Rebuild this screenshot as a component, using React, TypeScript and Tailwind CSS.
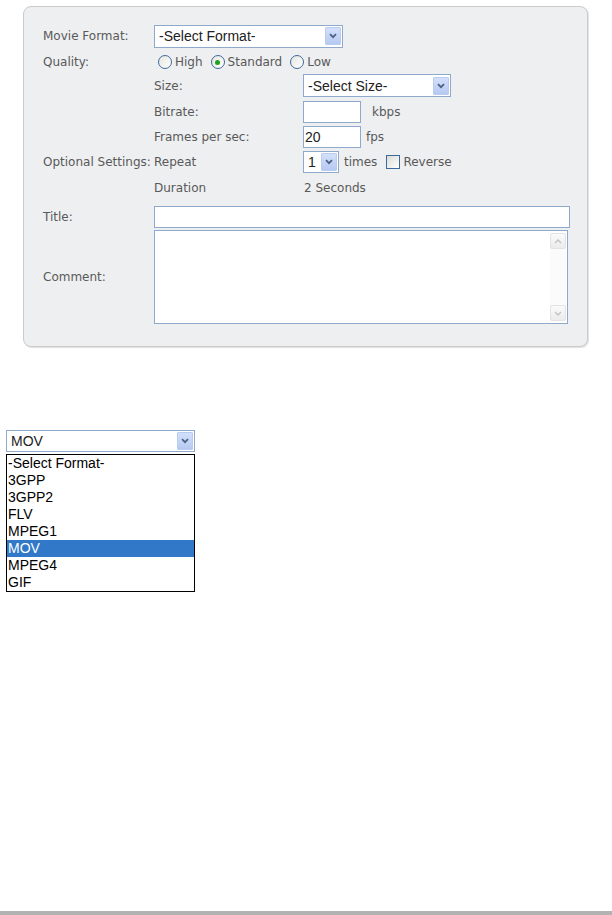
import React from 'react';

const label = "font-['DejaVu_Sans',sans-serif] text-[12px] text-[#595959]";
const field = "font-['Liberation_Sans',Arial,sans-serif] text-[14px] text-[#222]";

const ArrowButton = () => (
  <div className="flex h-[18px] w-[16px] shrink-0 items-center justify-center rounded-[1px] border border-[#b9cbef] bg-gradient-to-b from-[#d3e0fb] to-[#b6c9f1]">
    <svg width="8" height="6" viewBox="0 0 8 6">
      <path d="M1 1.2 L4 4.2 L7 1.2" fill="none" stroke="#4d6185" strokeWidth="1.8" />
    </svg>
  </div>
);

const Select = ({ text, w, h = 'h-[22px]' }: { text: string; w: string; h?: string }) => (
  <div className={`${w} ${h} flex items-center justify-between border border-[#8fa9cd] bg-white pl-[4px] pr-[1px]`}>
    <span className={`${field} leading-none`}>{text}</span>
    <ArrowButton />
  </div>
);

const Radio = ({ checked = false }: { checked?: boolean }) => (
  <div className="flex h-[14px] w-[14px] shrink-0 items-center justify-center rounded-full border border-[#3d6a9c] bg-gradient-to-br from-[#e6e6e0] to-white">
    {checked && <div className="h-[5px] w-[5px] rounded-full bg-[#21a121]" />}
  </div>
);

const ScrollBtn = ({ up }: { up?: boolean }) => (
  <div className="flex h-[16px] w-[16px] items-center justify-center rounded-[2px] border border-[#e3e3e3] bg-gradient-to-b from-[#fafafa] to-[#ececec]">
    <svg width="8" height="5" viewBox="0 0 8 5">
      <path d={up ? 'M1 4 L4 1 L7 4' : 'M1 1 L4 4 L7 1'} fill="none" stroke="#c2c2c2" strokeWidth="1.4" />
    </svg>
  </div>
);

const formats = ['-Select Format-', '3GPP', '3GPP2', 'FLV', 'MPEG1', 'MOV', 'MPEG4', 'GIF'];

export default function App() {
  return (
    <div className="relative h-[915px] w-[612px] overflow-hidden bg-white">
      {/* settings panel */}
      <div className="ml-[23px] mt-[6px] h-[341px] w-[565px] rounded-[8px] border border-[#cbcbcb] bg-[#eeeff1] pl-[19px] pt-[18px] shadow-[1px_1px_1px_rgba(0,0,0,0.12)]">
        <div className="flex h-[22px] items-center">
          <span className={`${label} w-[111px]`}>Movie Format:</span>
          <Select text="-Select Format-" w="w-[189px]" h="h-[23px]" />
        </div>

        <div className="mt-[3px] flex h-[24px] items-center">
          <span className={`${label} w-[111px]`}>Quality:</span>
          <div className="ml-[4px] flex items-center">
            <Radio />
            <span className={`${label} ml-[3px]`}>High</span>
            <div className="ml-[8px]"><Radio checked /></div>
            <span className={`${label} ml-[3px]`}>Standard</span>
            <div className="ml-[8px]"><Radio /></div>
            <span className={`${label} ml-[3px]`}>Low</span>
          </div>
        </div>

        <div className="flex h-[23px] items-center">
          <span className="w-[111px]" />
          <span className={`${label} w-[149px]`}>Size:</span>
          <Select text="-Select Size-" w="w-[148px]" h="h-[23px]" />
        </div>

        <div className="mt-[4px] flex h-[22px] items-center">
          <span className="w-[111px]" />
          <span className={`${label} w-[149px]`}>Bitrate:</span>
          <div className="h-[22px] w-[58px] border border-[#8fa9cd] bg-white" />
          <span className={`${label} ml-[11px]`}>kbps</span>
        </div>

        <div className="mt-[3px] flex h-[22px] items-center">
          <span className="w-[111px]" />
          <span className={`${label} w-[149px]`}>Frames per sec:</span>
          <div className={`${field} flex h-[22px] w-[58px] items-center border border-[#8fa9cd] bg-white pl-[1px]`}>20</div>
          <span className={`${label} ml-[5px]`}>fps</span>
        </div>

        <div className="mt-[3px] flex h-[22px] items-center">
          <span className={`${label} w-[111px]`}>Optional Settings:</span>
          <span className={`${label} w-[149px]`}>Repeat</span>
          <Select text="1" w="w-[36px]" />
          <span className={`${label} ml-[5px]`}>times</span>
          <div className="ml-[9px] h-[14px] w-[14px] border border-[#3d6a9c] bg-gradient-to-br from-[#dcdcd6] to-white" />
          <span className={`${label} ml-[3px]`}>Reverse</span>
        </div>

        <div className="mt-[3px] flex h-[24px] items-center">
          <span className="w-[111px]" />
          <span className={`${label} w-[150px]`}>Duration</span>
          <span className={label}>2 Seconds</span>
        </div>

        <div className="mt-[6px] flex h-[22px] items-center">
          <span className={`${label} w-[111px]`}>Title:</span>
          <div className="h-[22px] w-[416px] border border-[#8fa9cd] bg-white" />
        </div>

        <div className="mt-[2px] flex h-[94px] items-center">
          <span className={`${label} w-[111px]`}>Comment:</span>
          <div className="flex h-[94px] w-[414px] justify-end border border-[#8fa9cd] bg-white py-[2px] pr-[1px]">
            <div className="flex w-[16px] flex-col justify-between bg-[#fbfbfb]">
              <ScrollBtn up />
              <ScrollBtn />
            </div>
          </div>
        </div>
      </div>

      {/* open dropdown example */}
      <div className="ml-[6px] mt-[83px] w-[189px]">
        <Select text="MOV" w="w-[189px]" />
        <div className="mt-[2px] border border-black bg-white">
          {formats.map((f) => (
            <div
              key={f}
              className={`${field} flex h-[17px] items-center pl-[1px] ${f === 'MOV' ? 'bg-[#3178c8] text-white' : 'text-black'}`}
            >
              {f}
            </div>
          ))}
        </div>
      </div>

      <div className="absolute bottom-0 left-0 h-[4px] w-full bg-[#b2b2b2]" />
    </div>
  );
}
